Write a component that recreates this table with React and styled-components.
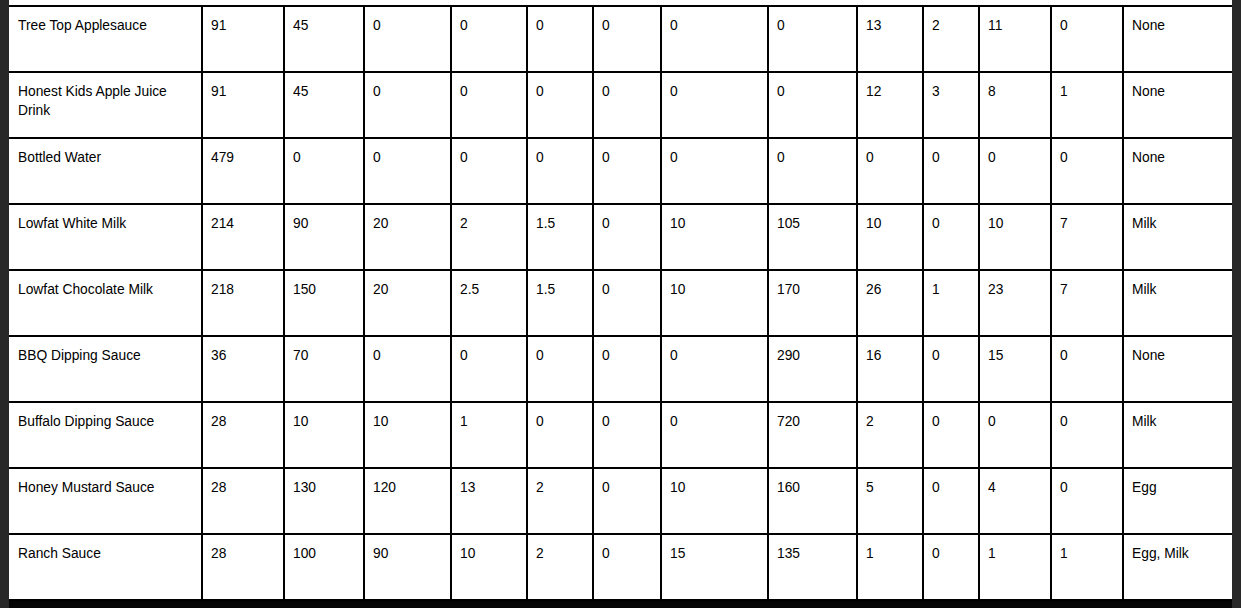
import React from 'react'
import styled, { createGlobalStyle } from 'styled-components'

const GlobalStyle = createGlobalStyle`
  html, body {
    margin: 0;
    padding: 0;
    background: #282828;
  }
  body {
    font-family: "Liberation Sans", Arial, sans-serif;
  }
`

const COLS = [192, 82, 80, 87, 76, 66, 68, 107, 89, 66, 56, 72, 72, 110]

const ROWS = [
  ['Tree Top Applesauce', '91', '45', '0', '0', '0', '0', '0', '0', '13', '2', '11', '0', 'None'],
  ['Honest Kids Apple Juice Drink', '91', '45', '0', '0', '0', '0', '0', '0', '12', '3', '8', '1', 'None'],
  ['Bottled Water', '479', '0', '0', '0', '0', '0', '0', '0', '0', '0', '0', '0', 'None'],
  ['Lowfat White Milk', '214', '90', '20', '2', '1.5', '0', '10', '105', '10', '0', '10', '7', 'Milk'],
  ['Lowfat Chocolate Milk', '218', '150', '20', '2.5', '1.5', '0', '10', '170', '26', '1', '23', '7', 'Milk'],
  ['BBQ Dipping Sauce', '36', '70', '0', '0', '0', '0', '0', '290', '16', '0', '15', '0', 'None'],
  ['Buffalo Dipping Sauce', '28', '10', '10', '1', '0', '0', '0', '720', '2', '0', '0', '0', 'Milk'],
  ['Honey Mustard Sauce', '28', '130', '120', '13', '2', '0', '10', '160', '5', '0', '4', '0', 'Egg'],
  ['Ranch Sauce', '28', '100', '90', '10', '2', '0', '15', '135', '1', '0', '1', '1', 'Egg, Milk'],
]

const Viewer = styled.div`
  height: 608px;
  padding: 0 9px;
  overflow: hidden;
`

const Page = styled.div`
  background: #fff;
  padding-top: 5px;
  border-bottom: 7px solid #050505;
`

const Grid = styled.div`
  display: grid;
  grid-template-columns: ${COLS.map((w) => `${w}px`).join(' ')};
  grid-auto-rows: 66px;
  border-top: 2px solid #000;
`

const Cell = styled.div`
  box-sizing: border-box;
  border-bottom: 2px solid #000;
  border-left: ${(p) => (p.$first ? 'none' : '2px solid #000')};
  padding: 9px 9px 0 ${(p) => (p.$first ? '9px' : '8px')};
  font-size: 13.8px;
  line-height: 19px;
  color: #000;
  overflow: hidden;
`

export default function App() {
  return (
    <>
      <GlobalStyle />
      <Viewer>
        <Page>
          <Grid>
            {ROWS.map((row, r) =>
              row.map((val, c) => (
                <Cell key={`${r}-${c}`} $first={c === 0}>
                  {val}
                </Cell>
              ))
            )}
          </Grid>
        </Page>
      </Viewer>
    </>
  )
}
